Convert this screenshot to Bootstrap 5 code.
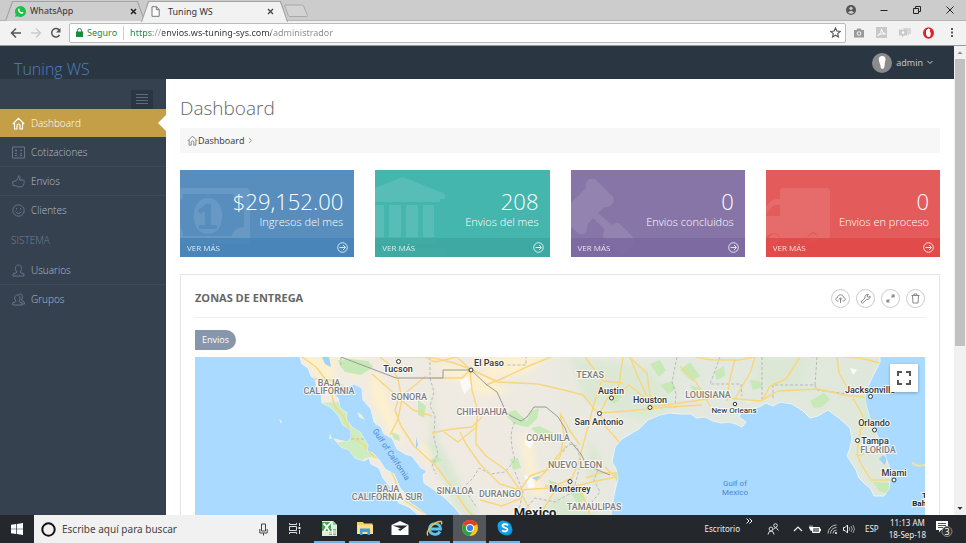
<!DOCTYPE html>
<html lang="es">
<head>
<meta charset="utf-8">
<meta name="viewport" content="width=device-width, initial-scale=1">
<title>Tuning WS</title>
<link href="https://cdn.jsdelivr.net/npm/bootstrap@5.3.0/dist/css/bootstrap.min.css" rel="stylesheet">
<style>
body{font-family:"Open Sans","Noto Sans",sans-serif;font-size:10px;line-height:14px;color:#333;background:#fff}
svg{display:block;flex:none}
a{text-decoration:none}
button{padding:0;border:0;background:none;color:inherit;display:flex;align-items:center;justify-content:center}
.light{font-weight:300}
/* browser chrome */
.tabstrip{height:21px;background:#ccc;border-bottom:1px solid #b5b5b5;padding-left:5px;font-family:"Noto Sans",sans-serif;font-size:9px}
.tabbox{position:relative;height:20px;margin-top:1px;width:140px;padding:0 8px 0 10px;color:#333;z-index:0}
.tabbox::before,.tabbox::after{content:"";position:absolute;inset:0;z-index:-1;background:#a3a3a3;clip-path:polygon(0 100%,7px 0,calc(100% - 7px) 0,100% 100%)}
.tabbox::after{inset:1px 1px 0 1px;background:#cecece}
.tabbox.current{width:147px;margin-left:-4px;padding-right:10px;height:21px}
.tabbox.current::after{background:#f2f2f2}
.newtab{margin-left:-5px}
.winbtns{gap:19px;padding-right:11px}
.toolbar{height:25px;background:#f2f2f2;border-bottom:1px solid #999;padding:1px 12px 2px 10px}
.omnibox{height:20px;background:#fff;border:1px solid #bbb;border-radius:2px;padding:0 4px 0 6px;font-family:"Noto Sans",sans-serif;font-size:9px}
.omnibox input{border:0;outline:0;padding:0;font-size:9px;line-height:14px;color:#333;min-width:0;background:linear-gradient(90deg,#1a8a3f 0 23px,#999 23px 32px,#333 32px 141px,#888 141px);-webkit-background-clip:text;background-clip:text;-webkit-text-fill-color:transparent}
.secure{color:#1a8a3f;border-right:1px solid #ccc;padding-right:6px;margin-right:6px}
/* site */
.topbar{height:33px;background:#2b3643;padding:0 21px 0 14px}
.brandname{font-size:16px;line-height:24px;color:#4b80bd;margin-top:13px}
.brandname:hover{color:#4b80bd}
.account{color:#c6cfda;font-size:9px}
.avatar{width:20px;height:20px;border-radius:50%;background:#8b8b8b}
.sidebar{width:166px;background:#364150;padding-top:11px}
.menutoggle{width:22px;height:19px;background:#2b3643;margin:0 13px 0 auto}
.sidelink{position:relative;height:29px;padding-left:12px;gap:6px;color:#b4bfce;font-size:10px;font-weight:300;border-top:1px solid #3f4b5c}
.sidelink svg{color:#66748a}
.sidelink.first,.sidelink.current{border-top-color:transparent}
.sidelink.current{height:28px;background:#c49f47;color:#fff;border-top:0}
.sidelink.current svg{color:#fff}
.sidelink.current::after{content:"";position:absolute;right:0;top:6px;border:8px solid transparent;border-right-color:#fff;border-left:0}
.sidehead{height:31px;padding-left:11px;color:#708096;font-weight:300}
.content{padding:17px 14px 0 14px}
.pagetitle{font-size:19px;line-height:24px;font-weight:300;color:#666;margin:0 0 8px}
.crumbs{height:25px;background:#f7f7f7;padding:0 7px;margin:0 0 17px;color:#333;font-size:9px}
.crumbs a{color:#333}
.stats{--bs-gutter-x:21px}
.stat{height:87px;color:#fff;overflow:hidden;position:relative}
.stat .ghost{position:absolute;left:0;top:0;color:#fff;opacity:.1}
.stat .figures{position:relative;height:68px;padding:18px 11px 0 0;text-align:right;font-weight:300}
.stat .num{font-size:22px;line-height:26px}
.stat .lbl{font-size:11px;line-height:16px}
.stat .more{position:relative;height:19px;padding:0 6px 0 7px;font-size:8px;color:#fff}
.stat .more span,.stat .more svg{opacity:.8}
.blue{background:#578ebe}.blue .more{background:#4884b8e0}
.green{background:#44b6ae}.green .more{background:#3ea7a0e0}
.purple{background:#8775a7}.purple .more{background:#7c699fe0}
.red{background:#e35b5a}.red .more{background:#e04a49e0}
.portlet{border:1px solid #e4e4e4;margin-top:17px;padding:0 14px}
.portlet-head{height:43px;border-bottom:1px solid #eee}
.portlet-head h2{font-size:11px;line-height:16px;font-weight:700;color:#666;margin:3px 0 0}
.tools{gap:6px}
.round{width:19px;height:19px;border:1px solid #ccc;border-radius:50%;color:#888}
.pill{margin:12px 0 7px;height:20px;padding:0 7px;background:#8896ab;color:#fff;border-radius:0 10px 10px 0;font-size:9px}
.mapwrap{position:relative}
.mapwrap .full{position:absolute;right:7px;top:7px;width:28px;height:28px;background:#fff;box-shadow:0 1px 3px #0004}
.map{width:100%;height:220px}
.map text{font-family:Roboto,sans-serif;paint-order:stroke;stroke:#fff;stroke-width:2px;stroke-opacity:.75;text-anchor:middle}
.map .st{font-size:9px;font-weight:500;fill:#7d7d7d}
.map .ct{font-size:9px;font-weight:500;fill:#333}
.map .cs{font-size:8px;fill:#222}
.map .sea{font-size:8px;fill:#4b86cf}
.map .sea text{stroke:none}
.map .nat{font-size:13px;font-weight:700;fill:#222}
.map .isle{font-size:8px;font-weight:700;fill:#222}
.scroller{width:12px;background:#f1f1f1;padding:4px 0}
.thumb{width:10px;height:287px;background:#c1c1c1;margin:4px 1px 0}
/* desktop taskbar */
.taskbar{height:28px;background:#24282d;color:#eee;font-size:8px;line-height:12px;font-family:"Noto Sans",sans-serif}
.start{width:34px}
.findbox{width:243px;background:#f1f1f1;padding:0 9px 0 7px;gap:6px;color:#333}
.findbox input{border:0;outline:0;background:none;padding:0;font-size:10px;line-height:16px;min-width:0;color:#444}
.findbox input::placeholder{color:#444;opacity:1}
.app{width:35px;border-bottom:2px solid transparent}
.app.open{border-bottom-color:#6fb2e6;width:31px;margin:0 2px}
.app.here{background:#53565a;border-bottom-color:#76b9ed;width:33px;margin:0 1px}
.tray{gap:6px;padding-right:13px}
</style>
<script src="https://cdn.jsdelivr.net/npm/bootstrap@5.3.0/dist/js/bootstrap.bundle.min.js"></script>
</head>
<body class="vh-100 d-flex flex-column overflow-hidden">

<div class="tabstrip d-flex flex-shrink-0">
  <div class="tabbox d-flex align-items-center">
    <svg width="11" height="11" viewBox="0 0 12 12"><path d="M6 0a6 6 0 1 1-3 11.200L0 12l.8-3A6 6 0 0 1 6 0z" fill="#1fbf45"/><path d="M3.700 3c.8-.8 1.200 0 1.600 1.100L4.800 5c.5 1 1.200 1.600 2.200 2l.8-.8c1.300.5 1.800.9 1 1.700C7 10.500 1.600 5 3.700 3z" fill="#fff"/></svg>
    <span class="ms-1 flex-grow-1">WhatsApp</span>
    <button type="button" aria-label="Cerrar WhatsApp"><svg width="7" height="7" viewBox="0 0 7 7"><path d="M1 1l5 5M6 1L1 6" stroke="#222" stroke-width="1.500"/></svg></button>
  </div>
  <div class="tabbox current d-flex align-items-center">
    <svg width="9" height="11" viewBox="0 0 9 11"><path d="M1 .7h4.500L8.200 3.500v6.800H1zM5.300.7v3h2.900" fill="#fff" stroke="#777"/></svg>
    <span class="ms-1 ps-1 flex-grow-1">Tuning WS</span>
    <button type="button" class="me-1" aria-label="Cerrar Tuning WS"><svg width="7" height="7" viewBox="0 0 7 7"><path d="M1 1l5 5M6 1L1 6" stroke="#444" stroke-width="1.300"/></svg></button>
  </div>
  <button type="button" class="newtab" aria-label="Nueva pestaña"><svg width="26" height="13" viewBox="0 0 26 13"><path d="M1.500 1h17.500q1 0 1.500 1l4 9.500q.3 1-.8 1H7q-1.200 0-1.700-1z" fill="#d3d3d3" stroke="#aaa"/></svg></button>
  <div class="winbtns d-flex align-items-center ms-auto">
    <button type="button" aria-label="Perfil"><svg width="10" height="10" viewBox="0 0 10 10"><circle cx="5" cy="5" r="5" fill="#555"/><circle cx="5" cy="3.300" r="1.600" fill="#ccc"/><path d="M2 7.400Q5 4.800 8 7.400 5 10 2 7.400z" fill="#ccc"/></svg></button>
    <button type="button" class="ms-1" aria-label="Minimizar"><svg width="10" height="10"><path d="M1.500 5.500h7" stroke="#222"/></svg></button>
    <button type="button" class="ms-1" aria-label="Restaurar"><svg width="10" height="10"><path d="M1.500 3.500h5v5h-5zM3.500 3V1.500h5v5H7" fill="none" stroke="#222"/></svg></button>
    <button type="button" class="ms-1" aria-label="Cerrar"><svg width="10" height="10"><path d="M1.500 1.500l7 7M8.500 1.500l-7 7" stroke="#222"/></svg></button>
  </div>
</div>

<div class="toolbar d-flex align-items-center flex-shrink-0">
  <button type="button" aria-label="Atrás"><svg width="12" height="12"><path d="M11 6H2M6 1.500L1.500 6 6 10.500" fill="none" stroke="#555" stroke-width="1.500"/></svg></button>
  <button type="button" class="mx-2" aria-label="Adelante"><svg width="12" height="12"><path d="M1 6h9M6 1.500L10.500 6 6 10.500" fill="none" stroke="#ccc" stroke-width="1.500"/></svg></button>
  <button type="button" aria-label="Recargar"><svg width="11" height="12"><path d="M9.300 3.300A4.200 4.200 0 1 0 9.500 8" fill="none" stroke="#555" stroke-width="1.500"/><path d="M10.500 1v4.500H6z" fill="#555"/></svg></button>
  <div class="omnibox d-flex align-items-center flex-grow-1 ms-2">
    <svg width="7" height="9" viewBox="0 0 7 9"><path d="M0 3.500h7V9H0z" fill="#1a8a3f"/><path d="M1.500 4V2.500a2 2 0 0 1 4 0V4" fill="none" stroke="#1a8a3f"/></svg>
    <span class="secure ms-1">Seguro</span>
    <input class="flex-grow-1" type="text" aria-label="Dirección" value="https://envios.ws-tuning-sys.com/administrador">
    <button type="button" aria-label="Marcar"><svg width="11" height="11" viewBox="0 0 12 12"><path d="M6 1l1.500 3.400 3.600.4-2.700 2.500.8 3.600L6 9l-3.200 1.900.8-3.600L.9 4.800l3.600-.4z" fill="none" stroke="#555" stroke-width="1.200"/></svg></button>
  </div>
  <div class="d-flex align-items-center ms-2 gap-2">
    <svg width="10" height="10" viewBox="0 0 10 10"><path d="M0 2h2.500l1-1.500h3l1 1.500H10v7.500H0z" fill="#999"/><circle cx="5" cy="5.500" r="2.300" fill="#f2f2f2"/><circle cx="5" cy="5.500" r="1.300" fill="#999"/></svg>
    <svg class="ms-1" width="11" height="11"><path d="M0 0h11v11H0z" fill="#c9c9c9"/><path d="M2 8.500Q6 6 5.500 2 6 6 9.500 7 5 6 2 8.500z" fill="none" stroke="#fff"/></svg>
    <svg class="ms-1" width="12" height="10"><path d="M4 0h8v6h-2v2L8 6z" fill="#d8d8d8"/><path d="M0 1.500h8v6H5l-2 2v-2H0z" fill="#c9c9c9"/><circle cx="4" cy="4.500" r="1.300" fill="#fff"/></svg>
    <svg class="ms-1" width="11" height="12" viewBox="0 0 11 12"><ellipse cx="5.500" cy="6" rx="5.500" ry="5.800" fill="#e02327"/><path d="M4 2h1V1.500h1V2h1v4l1-1-.5 3.500Q7 10 5.500 10T3 7.500V3h1z" fill="#fff"/></svg>
    <button type="button" class="ms-1 ps-1" aria-label="Menú"><svg width="4" height="11"><path d="M1 1h2v2H1zM1 4.500h2v2H1zM1 8h2v2H1z" fill="#555"/></svg></button>
  </div>
</div>

<div class="d-flex flex-grow-1 overflow-hidden">
  <div class="d-flex flex-column flex-grow-1 overflow-hidden">
    <header class="topbar d-flex justify-content-between align-items-center flex-shrink-0">
      <a href="#" class="brandname light">Tuning WS</a>
      <button type="button" class="account gap-1">
        <span class="avatar d-flex align-items-center justify-content-center"><svg width="8" height="13" viewBox="0 0 8 13"><path d="M4 0c3 0 4 2 3.300 4.500C6.500 7 7 9 6.200 11.500c-.6 2-3.400 1.500-3.500 0C2.600 9 1.800 8 1 5 .2 2 1.500 0 4 0z" fill="#fff"/></svg></span>
        <span>admin</span>
        <svg width="6" height="5"><path d="M.5 1L3 3.500 5.500 1" fill="none" stroke="#c6cfda"/></svg>
      </button>
    </header>
    <div class="d-flex flex-grow-1 overflow-hidden">
      <nav class="sidebar flex-shrink-0">
        <button type="button" class="menutoggle" aria-label="Contraer menú"><svg width="12" height="11"><path d="M0 .5h12M0 3.500h12M0 6.500h12M0 9.500h12" stroke="#5c6b80"/></svg></button>
        <a href="#" class="sidelink current d-flex align-items-center"><svg width="13" height="13" viewBox="0 0 13 13"><path d="M.8 7L6.500 1.300 12.200 7M2.500 6v6H5V8.500a1.500 1.500 0 0 1 3 0V12h2.500V6" fill="none" stroke="currentColor" stroke-width="1.200"/></svg><span>Dashboard</span></a>
        <a href="#" class="sidelink first d-flex align-items-center"><svg width="13" height="13" viewBox="0 0 13 13"><path d="M.5 1h12v11H.5z" fill="none" stroke="currentColor"/><path d="M3 4.500h2M4 3.500v2M8 4.500h2M3 7.500h2M3 9.500h2M8 7.500h2M8 9.500h2" stroke="currentColor"/></svg><span>Cotizaciones</span></a>
        <a href="#" class="sidelink d-flex align-items-center"><svg width="13" height="13" viewBox="0 0 13 13"><path d="M.7 6.500L4 5.800 6.200 3V1.200C7 .3 8 1 8 2.500L7.600 5H11c1.500 0 1.500 1.500.8 2 .6.7.4 1.500-.2 2 .2 1-.3 2-1.600 2.500-2 .6-4 .6-6-.6L1 10.500z" fill="none" stroke="currentColor"/></svg><span>Envios</span></a>
        <a href="#" class="sidelink d-flex align-items-center"><svg width="13" height="13" viewBox="0 0 13 13"><circle cx="6.500" cy="6.500" r="5.700" fill="none" stroke="currentColor"/><path d="M3.500 7.500Q6.500 11.500 9.500 7.500M4.500 4v1.500M8.500 4v1.500" fill="none" stroke="currentColor"/></svg><span>Clientes</span></a>
        <div class="sidehead d-flex align-items-center">SISTEMA</div>
        <a href="#" class="sidelink first d-flex align-items-center"><svg width="13" height="13" viewBox="0 0 13 13"><path d="M5 8C2 5 3.500 1 6.500 1S11 5 8 8q0 1 4 1.800V12H1V9.800Q5 9 5 8z" fill="none" stroke="currentColor"/></svg><span>Usuarios</span></a>
        <a href="#" class="sidelink d-flex align-items-center"><svg width="13" height="13" viewBox="0 0 13 13"><path d="M4 8.200C1.500 5.500 3 2 5.500 2S9 5.500 7 8.200q0 1 3 1.600V12H.8V9.800Q4 9 4 8.200zM6.500 1.600c3-2 5.500 1.400 3 5.400 0 1 3 1.500 3 3V11H10" fill="none" stroke="currentColor"/></svg><span>Grupos</span></a>
      </nav>
      <main class="content flex-grow-1 overflow-hidden">
        <h1 class="pagetitle">Dashboard</h1>
        <nav class="crumbs d-flex align-items-center" aria-label="Ruta">
          <svg width="11" height="11" viewBox="0 0 13 13"><path d="M.8 7L6.500 1.300 12.200 7M2.500 6v6H5V8.500a1.500 1.500 0 0 1 3 0V12h2.500V6" fill="none" stroke="#777"/></svg><a href="#">Dashboard</a>
          <svg class="ms-1" width="5" height="7"><path d="M1 1l2.500 2.500L1 6" fill="none" stroke="#999"/></svg>
        </nav>
        <div class="row row-cols-4 stats">
          <div class="col"><div class="stat blue">
            <svg class="ghost" width="72" height="86"><path fill-rule="evenodd" d="M0 18h66q4 0 4 4v48q0 4-4 4H0v-7q-1-9-1-10V30zM3 24q0 5-3 7v26q3 3 3 9h49q0-7 12-9V32q-9-1-11-8z" fill="currentColor"/><path fill-rule="evenodd" d="M28 28c19 0 19 36 0 36s-19-36 0-36zM26 34l-8 6 2 4 5-3v14h-6v4h18v-4h-6V34z" fill="currentColor"/></svg>
            <div class="figures"><div class="num">$29,152.00</div><div class="lbl">Ingresos del mes</div></div>
            <a href="#" class="more d-flex align-items-center justify-content-between"><span>VER MÁS</span><svg width="11" height="11"><path d="M2.500 5.500H8M6 3l2.500 2.500L6 8" fill="none" stroke="#fff"/><circle cx="5.500" cy="5.500" r="4.800" fill="none" stroke="#fff"/></svg></a>
          </div></div>
          <div class="col"><div class="stat green">
            <svg class="ghost" width="72" height="86"><path d="M28 7L70 24v5h-5v3H0V18zM0 35h9v32H0zM14 35h12v32H14zM31 35h12v32H31zM48 35h11v32H48zM0 68h61v6H0zM0 78h70v8H0z" fill="currentColor"/></svg>
            <div class="figures"><div class="num">208</div><div class="lbl">Envios del mes</div></div>
            <a href="#" class="more d-flex align-items-center justify-content-between"><span>VER MÁS</span><svg width="11" height="11"><path d="M2.500 5.500H8M6 3l2.500 2.500L6 8" fill="none" stroke="#fff"/><circle cx="5.500" cy="5.500" r="4.800" fill="none" stroke="#fff"/></svg></a>
          </div></div>
          <div class="col"><div class="stat purple">
            <svg class="ghost" width="72" height="86"><path d="M17 10q4-3 8 0l17 17q2 4-1 7-3 4-7 3L27 43l14 12q2-3 7-2l13 13q4 5 0 10l-5 6q-4 4-8 1L33 68q-2-4 1-8L22 48l-6 7q1 6-2 8-4 3-7 0L0 57V33l15-15q-1-5 2-8z" fill="currentColor"/></svg>
            <div class="figures"><div class="num">0</div><div class="lbl">Envios concluidos</div></div>
            <a href="#" class="more d-flex align-items-center justify-content-between"><span>VER MÁS</span><svg width="11" height="11"><path d="M2.500 5.500H8M6 3l2.500 2.500L6 8" fill="none" stroke="#fff"/><circle cx="5.500" cy="5.500" r="4.800" fill="none" stroke="#fff"/></svg></a>
          </div></div>
          <div class="col"><div class="stat red">
            <svg class="ghost" width="72" height="86"><path fill-rule="evenodd" d="M17 18h44q3 0 3 3v45q0 3-3 3h-9q-1-7-5-7t-6 7H14q-1-6-6-6t-8 5V36l5-5q2-2 9-2V21q0-3 3-3zM0 46h14V35H8l-8 9z" fill="currentColor"/><circle cx="47" cy="69" r="5" fill="currentColor"/><circle cx="8" cy="69" r="5" fill="currentColor"/></svg>
            <div class="figures"><div class="num">0</div><div class="lbl">Envios en proceso</div></div>
            <a href="#" class="more d-flex align-items-center justify-content-between"><span>VER MÁS</span><svg width="11" height="11"><path d="M2.500 5.500H8M6 3l2.500 2.500L6 8" fill="none" stroke="#fff"/><circle cx="5.500" cy="5.500" r="4.800" fill="none" stroke="#fff"/></svg></a>
          </div></div>
        </div>

        <section class="portlet">
          <div class="portlet-head d-flex align-items-center justify-content-between">
            <h2>ZONAS DE ENTREGA</h2>
            <div class="tools d-flex mt-1">
              <button type="button" class="round" aria-label="Subir"><svg width="11" height="11"><path d="M3.500 8H2.500C0 7.500.5 4.500 2.500 4.500 3 1 8 1 8.500 4.300 11 5 10.500 8 8.500 8H7.500M5.500 10V5M3.800 6.500L5.500 5l1.700 1.500" fill="none" stroke="currentColor"/></svg></button>
              <button type="button" class="round" aria-label="Ajustes"><svg width="11" height="11"><path d="M1 9l4-4c-.5-2 1-4 3.500-3.500L7 3l1 1.500L10 3c.5 2.500-1.500 4-3.500 3.500L2.500 10.300z" fill="none" stroke="currentColor"/></svg></button>
              <button type="button" class="round" aria-label="Ampliar"><svg width="11" height="11"><path d="M2.500 8.500l2-2M6.500 4.500l2-2M6.500 2H9v2.500M2 6.500V9h2.500" fill="none" stroke="currentColor" stroke-width="1.200"/></svg></button>
              <button type="button" class="round" aria-label="Eliminar"><svg width="11" height="11"><path d="M1.500 2.500h8M4 2.500V1h3v1.500M2.500 3l.5 7h5l.5-7" fill="none" stroke="currentColor"/></svg></button>
            </div>
          </div>
          <button type="button" class="pill">Envios</button>
          <div class="mapwrap">
            <svg class="map" viewBox="195 357 730 220" preserveAspectRatio="xMidYMin slice" role="img" aria-label="Mapa de zonas de entrega">
              <defs>
                <linearGradient id="land" x1="300" x2="900" y1="0" y2="0" gradientUnits="userSpaceOnUse"><stop offset="0" stop-color="#f2ebe1"/><stop offset=".35" stop-color="#eeeae2"/><stop offset=".6" stop-color="#e4e9df"/><stop offset="1" stop-color="#dfe7da"/></linearGradient>
                <path id="coast" d="M300 357l2 7 6 4 3 8 4 3 2 9 4 5 1 10 8 4 8 8 5 10 8 5v8l-4 4-13-3 7 8 8 3 6 8 9 3 5-3 2 6 8 4 4 10 8 10v7l8 8 10 4 9 8 6 7 10 5-2-7-14-12-9-6-4-9-5-5-6-14-9-5-5-8-7-8-6-2 1-6-8-13-8-5-6-8 1-6-7-5-2-10-6-5v-9l4-2 5 3 8 1 5-2 8 4 1 12 8 9 3 13 7 5 3 7 8 4 5 11 8 5 7 2 9 12 6 3-4 4 1 8 12 8 10 8 9 9 8 10 12 14 12 18 10 25h120l-6-62 2-13 3-14 2-7-2-10-4-7 3-15 7-8 10-6 7-4 9-9 12-5 9-2 11 1 11 0 5 4 9-1 8 4 8 2 8-1 7 2 6 3 4-5-7-5 4-7 16-3 7-4 7 3 7-4 12 2 11 7 7 7 8-2 10-6 11 8 11 10 2 11-2 9-3 8 4 6 5 8 3 8 6 6 6 5 3 7h10l5-7 2-17-6-17-7-18-7-15-5-17-1-13 7-14 8-16V340H300z"/>
                <clipPath id="landclip"><use href="#coast"/></clipPath>
                <filter id="soft"><feGaussianBlur stdDeviation="3"/></filter>
              </defs>
              <path d="M195 357h730v220H195z" fill="#aadaff"/>
              <use href="#coast" fill="url(#land)" stroke="#edf4f3"/>
              <g clip-path="url(#landclip)">
                <g filter="url(#soft)">
                  <path d="M300 355h35v20l-10 10zM335 357h25l10 12-15 8zM368 380l12-8 16 50 8 20-12-6-18-30zM435 362l40 8 38 22-30 4-35-18zM480 355h70l-22 18-40 6zM416 440l22 8-8 16zM520 440l10-8 4 30 10 35-14-6z" fill="#fcf0cf"/>
                  <path d="M424 440l18 6 30 60-14 8zM432 380l6 60-8 10zM446 470l20 26 30 50-20-6z" fill="#dde7d5"/>
                  <path d="M545 505l12-10 22 6 20 16-20 20-34-8zM590 440l12 20-6 30-10-20zM430 405l8 40 20 42 20 22-22-8-20-42z" fill="#d9e8d2"/>
                  <path d="M570 357l80 10 25 40-30 14-60-20zM760 357h50l-8 34-50-8zM855 375l18 30 8 20-18-4z" fill="#dce8d5"/>
                </g>
                <path d="M322 403l17-1 8 12 9 8 9 14 7 6 6 9-3 5-10 2-6 8-40-22 25-2z" fill="#cdecbf"/>
                <path d="M338 360l12-1 18 2 5 6-12 8-16-3-5-6zM505 414l10-4 12 11 4-10 8-3-2 11-9 8-14-3zM531 428l8-2 15 7-3 3-14-2zM510 459l8-1 3 10-8 2zM610 398l8-6 4 5-8 7zM650 364l10-4 6 10-7 7zM660 385l12-4 4 8-8 5zM680 370l10-8 10 14-8 5zM690 385l12 4 10 9-15-2zM714 372l10-6 1 10-8 4zM750 380l9 1 4 6-10 3zM810 401l14-8 6 6-8 8-8 1zM873 482l16 1 2 12-12-4zM864 419l8-4 2 7-8 3zM570 492l8-4 8 13-9 2zM430 461l6-5 6 4-8 4zM548 480l8 2 5 6-7 3zM614 473l6-1v12l-4-4zM418 400l8 6-2 12-6-3zM391 432l8 3 1 6-6-2z" fill="#c6e9b7"/>
                <path d="M460 380l7-3 5 9-8 8zM524 475l9 3 2 9-6 2zM526 433l8 8-4 8-5-5zM850 368l7 2-4 5z" fill="#fafafa"/>
                <path d="M322 357l3 7 6 3-2-10zM416 437l2 8-2 4zM532 478l7-2 2 2-5 2zM883 455l4 3-2 7-6-6z" fill="#9fd2f7"/>
                <g fill="none" stroke="#b9b9b9" stroke-dasharray="3 2">
                  <path d="M430 378l4 14-4 14 5 10-1 22 4 16-6 12 4 8M515 422c-6 10-4 24 0 38l-10 12-14 2-12-6-6 10-8 8 4 10 8 12M515 472l8 20-4 18M563 452l6-8 8 2 4 16-8 30-18 10-20-4-12 14M598 470l-4 10 6 12-8 10-4 12M677 357l-5 25 4 12-1 14M522 357l4-2v10h-20M720 357l-10 27h31l1 12M762 357v44M817 357l-2 28h-42v14M815 385l2 5 31 4M341 357v10M430 357v22M346 439h24"/>
                </g>
                <g fill="none" stroke="#f9d67b" stroke-width="1.400" stroke-linejoin="round">
                  <path d="M302 357l14 10 14 18 4 20 10 12 8 20 12 8 10 12 10 2 10 18 8 22 22 14M308 378l22 2 14 6"/>
                  <path d="M380 357l10 8 8 14 4 20-4 20-8 16M399 398l14 12 19 6M399 398l-4 12 6 16 13 20 22 20 15 20 16 24 20 18M372 374l16 14 11 10M399 398l15-12 12-10"/>
                  <path d="M395 357l35 0 24 6 16 6 28 13 40 2 30 7 15 4 15 18 30-2 40-4 34-2M486 385l15-6 30-14 20-8M425 357l10 5 22-5 13 12M432 378l30 0 8-8M470 370l2 20 6 22-2 16 0 16 10 12 20 14 14 20 30-2 22-10 6-14 8-30 8-30 7-22M432 433l20-4 20-2 10-10M478 426l-20 16-14-10"/>
                  <path d="M600 413l7-14 12-14 4-28M600 413l6 14 14 16M611 399l18-14 22 18-4-30-18-16M630 357l8 20 14 30M650 407l44-6 24-4 20 2 22 2 18-10 40-2 26 6 36 4M585 357l18 24 20 2M560 413l10 18 10 14M560 413l4 22-4 22-24 24"/>
                  <path d="M520 490l10-14 16-6 20-24M520 490l14 30 16 20M520 490l-20-6-20-20-14-20-6-12M545 486l30 0 26-6 16-3M586 478l14-5 20 0M580 488l8 20 6 30M555 490l-12 20-4 30M615 477l-10-10M480 500l22 6 20-8"/>
                  <path d="M680 366l16 16 14 24M695 357l18 3h26l20-4M735 359l-6 24-2 18M755 357l-4 14-16 28M800 357l-14 22-16 7-8 15M837 357l2 16 10 18M810 357l20-1 30 2 20 5M887 357l-10 24-3 18M874 398l4 18 6 20 10 24 2 12-2 16M853 398l10 18-2 12-4 26 4 10 10 16h22M860 428l20-6 8 16-10 10-20 8"/>
                </g>
                <path d="M341 357l55 21h47v-8h28l16 15 10 7 10 22 14 7 6-4 7-10h12l12 10 7 11 5 13 11 13 5 10 14 7 10 4" fill="none" stroke="#999"/>
              </g>
              <path d="M279 419l3 2-1 3zM330 433l2 6h-3zM357 412l5 3 3 5-6-3zM374 418l4-1 1 5-3 4zM744 401l9 0-4 3z" fill="#e7f1dc"/>
              <path d="M912 463l6 3 7-1" fill="none" stroke="#f4df9e" stroke-width="2"/>
              <g fill="#fff" stroke="#333"><circle cx="398.500" cy="361.500" r="2"/><circle cx="471" cy="370" r="2"/><circle cx="611.500" cy="398" r="2"/><circle cx="599.500" cy="413.500" r="2"/><circle cx="650" cy="407.500" r="2"/><circle cx="735" cy="404" r="1.700"/><circle cx="870.500" cy="396.500" r="2"/><circle cx="874.500" cy="430" r="2"/><circle cx="857.500" cy="440.500" r="2"/><circle cx="894" cy="480" r="2"/><circle cx="570" cy="481.500" r="2"/></g>
              <g class="st"><text x="329" y="386">BAJA</text><text x="329" y="394">CALIFORNIA</text><text x="409" y="400">SONORA</text><text x="482" y="415">CHIHUAHUA</text><text x="590" y="378">TEXAS</text><text x="548" y="441">COAHUILA</text><text x="575" y="468">NUEVO LEON</text><text x="388" y="492">BAJA</text><text x="387" y="500">CALIFORNIA SUR</text><text x="455" y="494">SINALOA</text><text x="500" y="497">DURANGO</text><text x="594" y="510">TAMAULIPAS</text><text x="708" y="398">LOUISIANA</text><text x="878" y="453">FLORIDA</text></g>
              <g class="ct"><text x="398" y="372">Tucson</text><text x="489" y="366">El Paso</text><text x="611" y="394">Austin</text><text x="599" y="425">San Antonio</text><text x="650" y="403">Houston</text><text x="570" y="492">Monterrey</text><text x="870" y="393">Jacksonville</text><text x="874" y="426">Orlando</text><text x="875" y="444">Tampa</text><text x="894" y="476">Miami</text></g>
              <g class="cs"><text x="734" y="413">New Orleans</text></g>
              <g class="sea"><text x="735" y="486">Gulf of</text><text x="735" y="495">Mexico</text><text transform="translate(389 456) rotate(56)">Gulf of California</text></g>
              <text class="nat" x="535" y="517">Mexico</text>
              <text class="isle" x="929" y="498">The</text><text class="isle" x="929" y="506">Bahamas</text>
            </svg>
            <button type="button" class="full" aria-label="Pantalla completa"><svg width="14" height="14"><path d="M1 5V1h4M9 1h4v4M13 9v4H9M5 13H1V9" fill="none" stroke="#555" stroke-width="2"/></svg></button>
          </div>
        </section>
      </main>
    </div>
  </div>
  <div class="scroller d-flex flex-column flex-shrink-0" aria-hidden="true">
    <svg class="mx-auto" width="6" height="5"><path d="M.5 4L3 1.500 5.500 4z" fill="#888"/></svg>
    <div class="thumb"></div>
    <svg class="mx-auto mt-auto" width="6" height="5"><path d="M.5 1h5L3 4z" fill="#333"/></svg>
  </div>
</div>

<footer class="taskbar d-flex flex-shrink-0">
  <button type="button" class="start" aria-label="Inicio"><svg width="12" height="12"><path d="M0 1.700L5.300 1v4.700H0zM6 .9L12 0v5.700H6zM0 6.300h5.300V11L0 10.300zM6 6.300h6V12l-6-.9z" fill="#fff"/></svg></button>
  <label class="findbox d-flex align-items-center">
    <svg width="15" height="15"><circle cx="7.500" cy="7.500" r="6.200" fill="none" stroke="#111" stroke-width="2"/></svg>
    <input class="flex-grow-1" type="text" aria-label="Buscar" placeholder="Escribe aquí para buscar">
    <svg width="9" height="13"><path d="M2.500 1h4v7h-4zM.8 6v4h7.400V6M4.500 10v2.500" fill="none" stroke="#444"/></svg>
  </label>
  <button type="button" class="app" aria-label="Vista de tareas"><svg width="13" height="11"><path d="M1.500 3.500h7v4h-7zM1.500 0v1.500h7V0M1.500 11V9.500h7V11M11.500 0v3M11.500 7v4" fill="none" stroke="#ddd"/><path d="M10.500 4h2v2h-2z" fill="#fff"/></svg></button>
  <button type="button" class="app open" aria-label="Excel"><svg width="17" height="17"><path d="M1 1h11l4 4v11H1z" fill="#e2efdc"/><path d="M12 1v4h4z" fill="#9ccb8e"/><path d="M8 9h7v6H8z" fill="#7fba77"/><path d="M8 11h7M8 13h7M11.500 9v6" stroke="#fff"/><path d="M1 2h9v9H1z" fill="#4aa552"/><path d="M2.500 3.500q4 3 6 8M10 2.500q-5 4-7 9" fill="none" stroke="#fff" stroke-width="1.800"/></svg></button>
  <button type="button" class="app open" aria-label="Explorador"><svg width="16" height="14"><path d="M0 1h6l1 1.500h8.500V13H0z" fill="#f4cf6b"/><path d="M0 4h16v9H0z" fill="#fde08d"/><path d="M3 7.500h10V14h-2.500v-3h-5v3H3z" fill="#3da0dc"/></svg></button>
  <button type="button" class="app" aria-label="Correo"><svg width="18" height="14"><path d="M9 0l8.500 4v10H.5V4z" fill="#fff"/><path d="M1.500 4.500h15L9 10l-2-2 3-.5z" fill="#24282d"/></svg></button>
  <button type="button" class="app open" aria-label="Internet Explorer"><svg width="17" height="17"><path d="M4 9h10.500c.5-7-11-7.500-11 0 0 6 8 7 10.500 2.500" fill="none" stroke="#5cc3ef" stroke-width="2.800"/><path d="M2 15.500C-1 12 8 1 15 1.500c1 .5.8 2 .3 3" fill="none" stroke="#f4c430" stroke-width="1.400"/></svg></button>
  <button type="button" class="app here" aria-label="Chrome"><svg width="16" height="16"><circle cx="8" cy="8" r="8" fill="#fbc714"/><path d="M8 8L1.100 4A8 8 0 0 1 15 4.200z" fill="#e33b2e"/><path d="M8 8L1.100 4A8 8 0 0 0 7.500 16l4-6z" fill="#2ca24c"/><circle cx="8" cy="8" r="4" fill="#fff"/><circle cx="8" cy="8" r="3.100" fill="#3f7fe8"/></svg></button>
  <button type="button" class="app open" aria-label="Skype"><svg width="16" height="16"><circle cx="6" cy="6" r="5.500" fill="#18a8ee"/><circle cx="10" cy="10" r="5.500" fill="#0b8edb"/><circle cx="8" cy="8" r="6.800" fill="#12a0e8"/><path d="M11 5.300C9 3.500 5.200 4 5.500 6.200c.3 1.800 5 1.300 5 3.400 0 2-3.500 2.400-5.500.8" fill="none" stroke="#fff" stroke-width="1.800"/></svg></button>
  <div class="tray d-flex align-items-center ms-auto">
    <span>Escritorio</span>
    <svg class="mb-3" width="7" height="6"><path d="M.5.5L3 3 .5 5.500M3.500.5L6 3 3.500 5.500" fill="none" stroke="#fff"/></svg>
    <svg class="mx-2" width="12" height="12"><path d="M1 11.500Q1.500 8 4 8t3 3.500" fill="none" stroke="#ddd"/><circle cx="4" cy="6" r="1.900" fill="none" stroke="#ddd"/><circle cx="8.500" cy="2.500" r="1.800" fill="none" stroke="#ddd"/><path d="M6.500 6.500Q9 2.500 11.300 7.500" fill="none" stroke="#ddd"/></svg>
    <svg width="10" height="6"><path d="M1 5l4-4 4 4" fill="none" stroke="#eee" stroke-width="1.200"/></svg>
    <svg width="12" height="9"><path d="M3.500 2.500h7v5h-7z" fill="#888" stroke="#fff"/><path d="M11 4h1v2h-1zM1 0v2M3 0v2M0 2h4v2L2 6z" fill="#fff" stroke="#fff" stroke-width=".5"/></svg>
    <svg width="10" height="10"><path d="M1 9.500A8.500 8.500 0 0 1 9.500 1M3.500 9.500a6 6 0 0 1 6-6M6 9.500A3.500 3.500 0 0 1 9.500 6" fill="none" stroke="#bbb"/><circle cx="9" cy="9" r="1" fill="#fff"/></svg>
    <svg width="12" height="10"><path d="M.5 3.500H2L4.500 1v8L2 6.500H.5z" fill="none" stroke="#eee"/><path d="M6 3q1.500 2 0 4M8 2q2.500 3 0 6M10 1q3 4 0 8" fill="none" stroke="#999"/></svg>
    <span class="mx-1">ESP</span>
    <time class="text-center">11:13 AM<br>18-Sep-18</time>
    <button type="button" class="ms-1" aria-label="3 notificaciones"><svg width="17" height="16"><path d="M0 0h12v9H5l-2 2.500V9H0z" fill="#fff"/><path d="M2 2.500h8M2 4.500h8M2 6.500h5" stroke="#555"/><circle cx="11" cy="10.500" r="5" fill="#333" stroke="#888"/><text x="11" y="14" font-size="9" fill="#fff" text-anchor="middle">3</text></svg></button>
  </div>
</footer>
</body>
</html>
